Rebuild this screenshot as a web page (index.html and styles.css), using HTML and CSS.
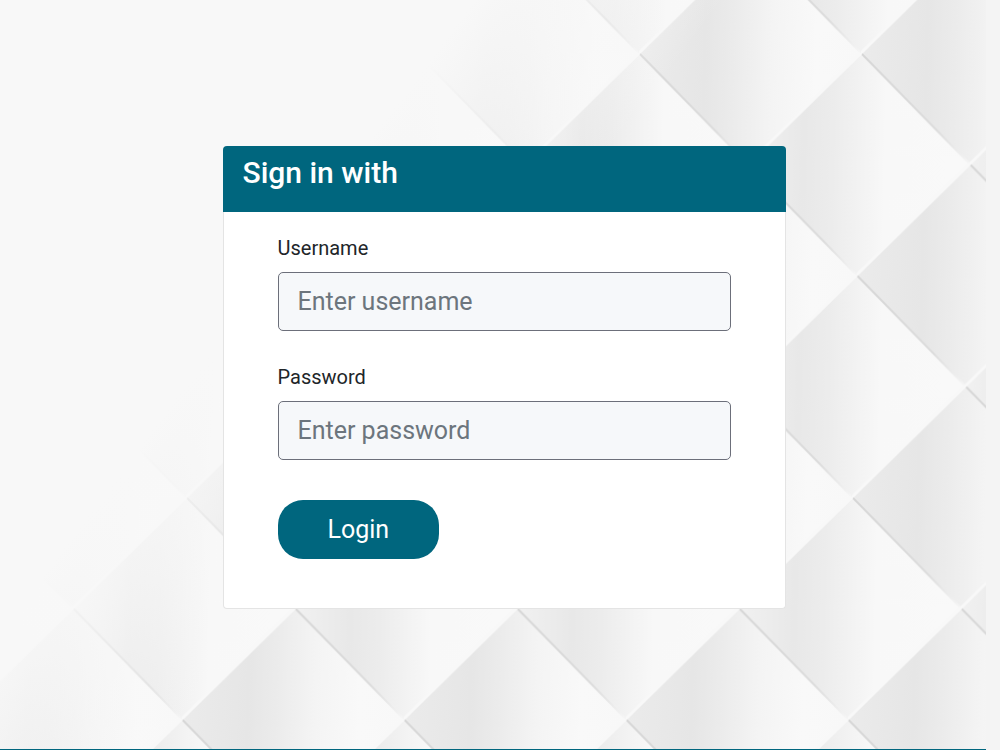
FILE: index.html
```
<!DOCTYPE html>
<html lang="en">
<head>
  <meta charset="UTF-8">
  <meta name="viewport" content="width=device-width, initial-scale=1.0">
  <title>Sign in</title>
  <link rel="stylesheet" href="styles.css">
</head>
<body>
  <main class="login-page">
    <svg class="backdrop" viewBox="0 0 986 749" preserveAspectRatio="xMidYMid slice" aria-hidden="true">
      <defs>
        <linearGradient id="tile-shade">
          <stop offset="0" stop-color="#ebebeb"/>
          <stop offset="0.3" stop-color="#e6e6e6"/>
          <stop offset="0.42" stop-color="#ebebeb"/>
          <stop offset="0.6" stop-color="#f4f4f4"/>
          <stop offset="0.8" stop-color="#f9f9f9"/>
          <stop offset="1" stop-color="#f8f8f8"/>
        </linearGradient>
        <linearGradient id="tile-lower">
          <stop offset="0" stop-color="#f1f1f1"/>
          <stop offset="0.25" stop-color="#e8e8e8"/>
          <stop offset="0.38" stop-color="#ececec"/>
          <stop offset="0.62" stop-color="#f8f8f8"/>
          <stop offset="1" stop-color="#f9f9f9"/>
        </linearGradient>
        <linearGradient id="edge-shadow" gradientUnits="userSpaceOnUse" x1="0" y1="0" x2="111" y2="111">
          <stop offset="0" stop-color="#d6d6d6"/>
          <stop offset="0.7" stop-color="#dcdcdc"/>
          <stop offset="1" stop-color="#f6f6f6"/>
        </linearGradient>
        <linearGradient id="fade" gradientUnits="userSpaceOnUse" x1="304" y1="228" x2="464" y2="348">
          <stop offset="0" stop-color="#f8f8f8"/>
          <stop offset="0.45" stop-color="#f8f8f8" stop-opacity="0.6"/>
          <stop offset="1" stop-color="#f8f8f8" stop-opacity="0"/>
        </linearGradient>
        <g id="edges">
          <path d="M0 0L111 -111" stroke="#f8f8f8" stroke-width="3"/>
          <path d="M1 1L110 110" stroke="url(#edge-shadow)" stroke-width="2"/>
        </g>
        <g id="tile">
          <path d="M0 0L111 -111L222 0L111 111Z" fill="url(#tile-shade)"/>
        </g>
        <g id="tile-soft">
          <path d="M0 0L111 -111L222 0L111 111Z" fill="url(#tile-lower)"/>
        </g>
        <pattern id="quilt" width="222" height="222" patternUnits="userSpaceOnUse" patternTransform="matrix(1 0 -0.02 1 639 53)">
          <use href="#tile"/>
          <use href="#tile" y="222"/>
          <use href="#tile-soft" x="-111" y="111"/>
          <use href="#tile-soft" x="111" y="111"/>
          <use href="#edges"/>
          <use href="#edges" y="222"/>
          <use href="#edges" x="-111" y="111"/>
          <use href="#edges" x="111" y="111"/>
        </pattern>
      </defs>
      <rect width="986" height="749" fill="url(#quilt)"/>
      <rect width="986" height="749" fill="url(#fade)"/>
    </svg>

    <section class="card">
      <h1 class="card-header">Sign in with</h1>
      <form class="card-body">
        <div class="field">
          <label for="username">Username</label>
          <input type="text" id="username" name="username" placeholder="Enter username">
        </div>
        <div class="field">
          <label for="password">Password</label>
          <input type="password" id="password" name="password" placeholder="Enter password">
        </div>
        <button type="submit" class="login-btn">Login</button>
      </form>
    </section>
  </main>
  <footer class="footer"></footer>
</body>
</html>
```
FILE: styles.css
```
* {
  box-sizing: border-box;
}

body {
  font-family: Roboto, sans-serif;
  background-color: #f4f4f4;
  color: #212529;
  margin: 0;
  padding-right: 14px;
  min-height: 100vh;
  display: flex;
  flex-direction: column;
}

.login-page {
  position: relative;
  flex: 1;
  display: flex;
  justify-content: center;
  align-items: flex-start;
  padding: 146px 0 40px 22px;
  overflow: hidden;
}

/* quilted wall behind the card */
.backdrop {
  position: absolute;
  top: 0;
  left: 0;
  width: 100%;
  height: 100%;
}

.card {
  position: relative;
  width: 100%;
  max-width: 563px;
}

.card-header {
  margin: 0;
  padding: 10px 20px 22px;
  font-size: 30px;
  line-height: 34px;
  font-weight: 500;
  color: #fff;
  background-color: #00667e;
  border-radius: 4px 4px 0 0;
}

.card-body {
  padding: 20px 54px 49px;
  background-color: #fff;
  border: 1px solid #e4e4e4;
  border-top: none;
  border-radius: 0 0 4px 4px;
}

.field {
  margin-bottom: 30px;
}

.field label {
  display: block;
  font-size: 20px;
  line-height: 32px;
  margin-bottom: 8px;
}

.field input {
  display: block;
  width: 100%;
  height: 59px;
  padding: 0 19px;
  font-family: inherit;
  font-size: 25px;
  color: #495057;
  background-color: #f6f8fa;
  border: 1px solid #6c6f7a;
  border-radius: 5px;
}

.field input::placeholder {
  color: #6c757d;
}

.login-btn {
  height: 59px;
  margin-top: 10px;
  padding: 0 50px;
  font-family: inherit;
  font-size: 25px;
  color: #fff;
  background-color: #00667e;
  border: none;
  border-radius: 25px;
  cursor: pointer;
}

.footer {
  height: 1px;
  background-color: #00667e;
}
```
